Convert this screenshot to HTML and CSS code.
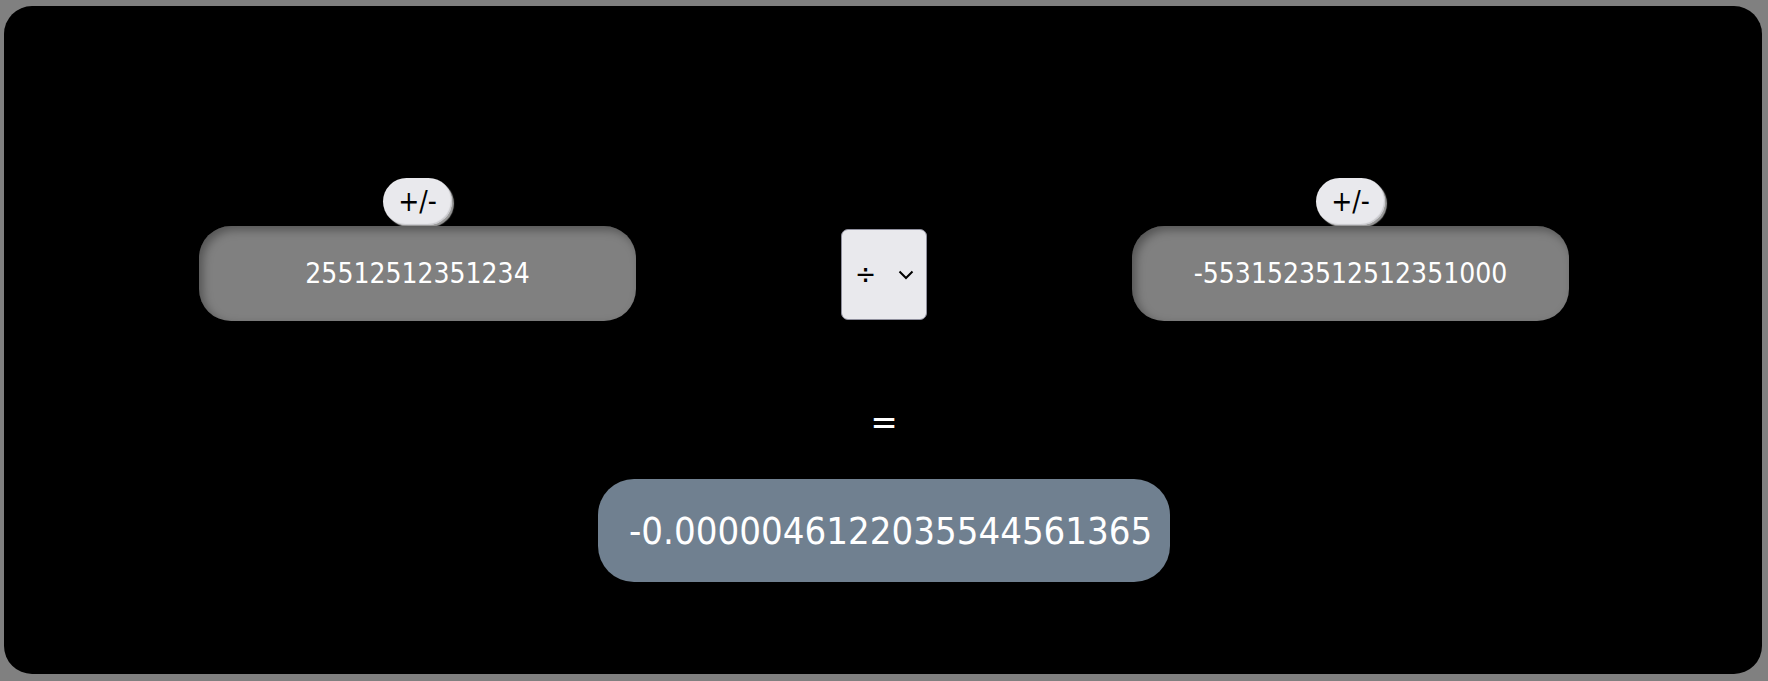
FILE: index.html
```html
<!DOCTYPE html>
<html>
<head>
<meta charset="utf-8">
<link rel="stylesheet" href="styles.css">
</head>
<body>
<div class="app">
  <div class="row">
    <div class="operand">
      <button class="sign">+/-</button>
      <div class="field">25512512351234</div>
    </div>
    <div class="op">
      <span class="op-sym">÷</span>
      <svg class="chev" width="16" height="10" viewBox="0 0 16 10"><path d="M1.5 1.5 L8 8 L14.5 1.5" fill="none" stroke="#000" stroke-width="2"/></svg>
    </div>
    <div class="operand">
      <button class="sign">+/-</button>
      <div class="field">-5531523512512351000</div>
    </div>
  </div>
  <div class="bottom">
    <div class="equals">=</div>
    <div class="result">-0.0000046122035544561365</div>
  </div>
</div>
</body>
</html>
```
FILE: styles.css
```css
html, body { margin: 0; }
body {
  background: #808080;
  height: 681px;
  padding: 6px 6px 7px 4px;
  box-sizing: border-box;
  font-family: "DejaVu Sans Condensed", "DejaVu Sans", sans-serif;
}
.app {
  background: #000;
  border-radius: 28px;
  height: 100%;
  padding-top: 172px;
  box-sizing: border-box;
}
.row {
  display: flex;
  align-items: flex-end;
  gap: 205px;
  padding-left: 195px;
}
.operand {
  display: flex;
  flex-direction: column;
  align-items: center;
  gap: 1px;
}
.sign {
  width: 69px;
  height: 47px;
  border: none;
  border-radius: 24px;
  background: #e9e9ed;
  box-shadow: 2px 2px 1px #9a9a9a, inset -1px -1px 1px #c8c8cc;
  font-family: inherit;
  font-size: 28px;
  color: #000;
  padding: 0;
  line-height: 47px;
}
.field {
  width: 437px;
  height: 95px;
  border-radius: 32px;
  background: #808080;
  box-shadow: inset 4px 4px 10px rgba(0,0,0,0.35);
  color: #fff;
  font-size: 28px;
  display: flex;
  align-items: center;
  justify-content: center;
}
.op {
  width: 86px;
  height: 91px;
  margin-bottom: 1px;
  border: 1.5px solid #8f8f9d;
  border-radius: 7px;
  background: #e9e9ed;
  display: flex;
  align-items: center;
  gap: 22px;
  padding-left: 13px;
  box-sizing: border-box;
}
.op-sym {
  font-size: 28px;
  color: #000;
  line-height: 1;
}
.chev { display: block; }
.bottom {
  display: flex;
  flex-direction: column;
  align-items: center;
  padding-left: 2px;
}
.equals {
  color: #fff;
  font-size: 36px;
  margin-top: 79px;
  line-height: 44px;
}
.result {
  margin-top: 35px;
  width: 572px;
  height: 103px;
  border-radius: 36px;
  background: #708090;
  color: #fff;
  font-size: 38px;
  display: flex;
  align-items: center;
  padding-left: 31px;
  box-sizing: border-box;
  white-space: nowrap;
}
```
